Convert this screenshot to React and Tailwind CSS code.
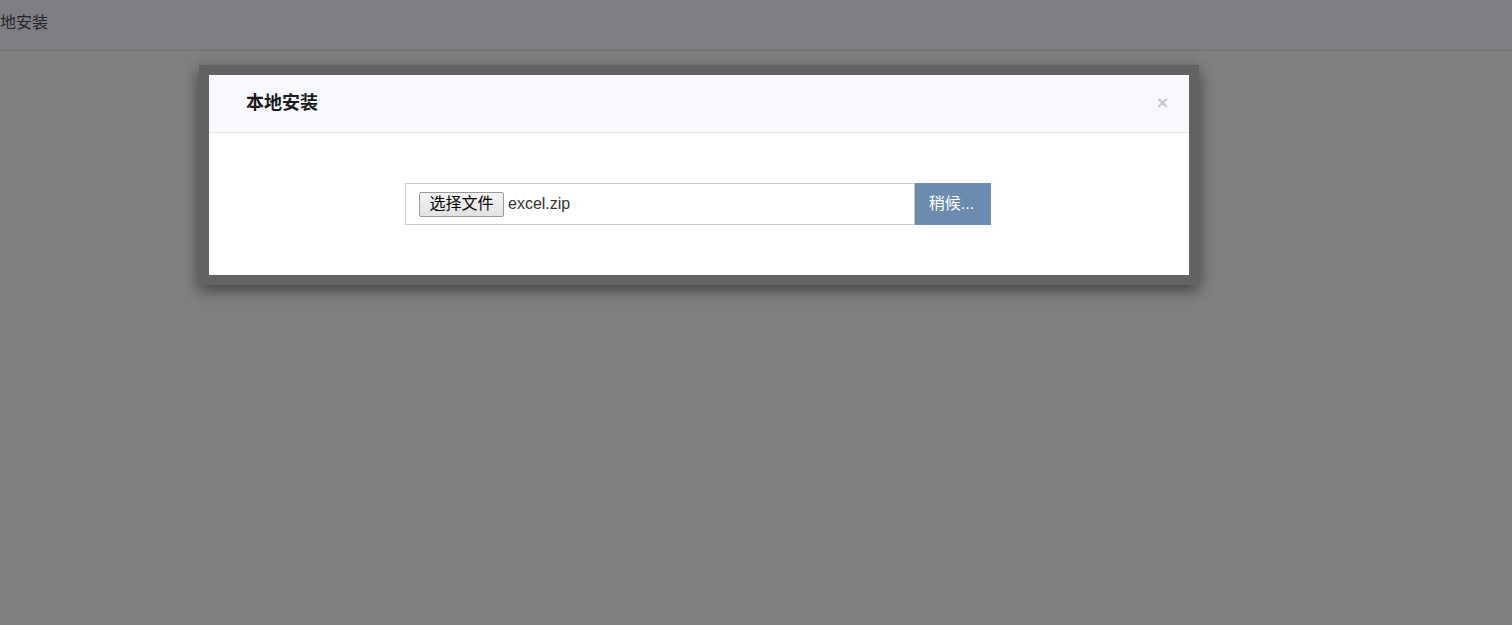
import React from 'react';

const cjk = { fontFamily: '"Liberation Sans", "Noto Sans CJK SC", sans-serif' };

const App = () => {
  return (
    <div className="h-[625px] w-full overflow-hidden bg-[#808080]" style={cjk}>
      {/* top bar behind the overlay */}
      <div className="flex h-[51px] items-center border-b border-[#6e6f72] bg-[#7e7f84] pb-[4px]">
        <span className="text-[16px] text-[#262626]">地安装</span>
      </div>

      {/* modal */}
      <div className="ml-[199px] mt-[14px] w-[1000px] border-[10px] border-[#636363] bg-white shadow-[0_5px_15px_rgba(0,0,0,0.5)]">
        <div className="flex h-[58px] items-center justify-between border-b border-[#e5e5e5] bg-[#f8f9fd] pl-[37px] pr-[21px]">
          <h4 className="text-[18px] font-bold text-[#1a1a1a]">本地安装</h4>
          <button className="mb-[2px] text-[19px] font-bold leading-none text-[#c6c6c6]">×</button>
        </div>
        <div className="flex justify-center py-[50px] pr-[2px]">
          <div className="flex h-[42px] w-[586px]">
            <div className="flex flex-1 items-center border border-[#cccccc] pl-[13px]">
              <span className="flex h-[25px] w-[85px] items-center justify-center rounded-[2px] border border-[#9a9a9a] bg-gradient-to-b from-[#f4f4f4] to-[#e2e2e2] text-[16px] text-black">
                选择文件
              </span>
              <span className="ml-[4px] text-[16px] text-[#333]">excel.zip</span>
            </div>
            <button className="flex w-[76px] items-center justify-center bg-[#6a8cae] pr-[3px] text-[16px] text-white">
              稍候...
            </button>
          </div>
        </div>
      </div>
    </div>
  );
};

export default App;
